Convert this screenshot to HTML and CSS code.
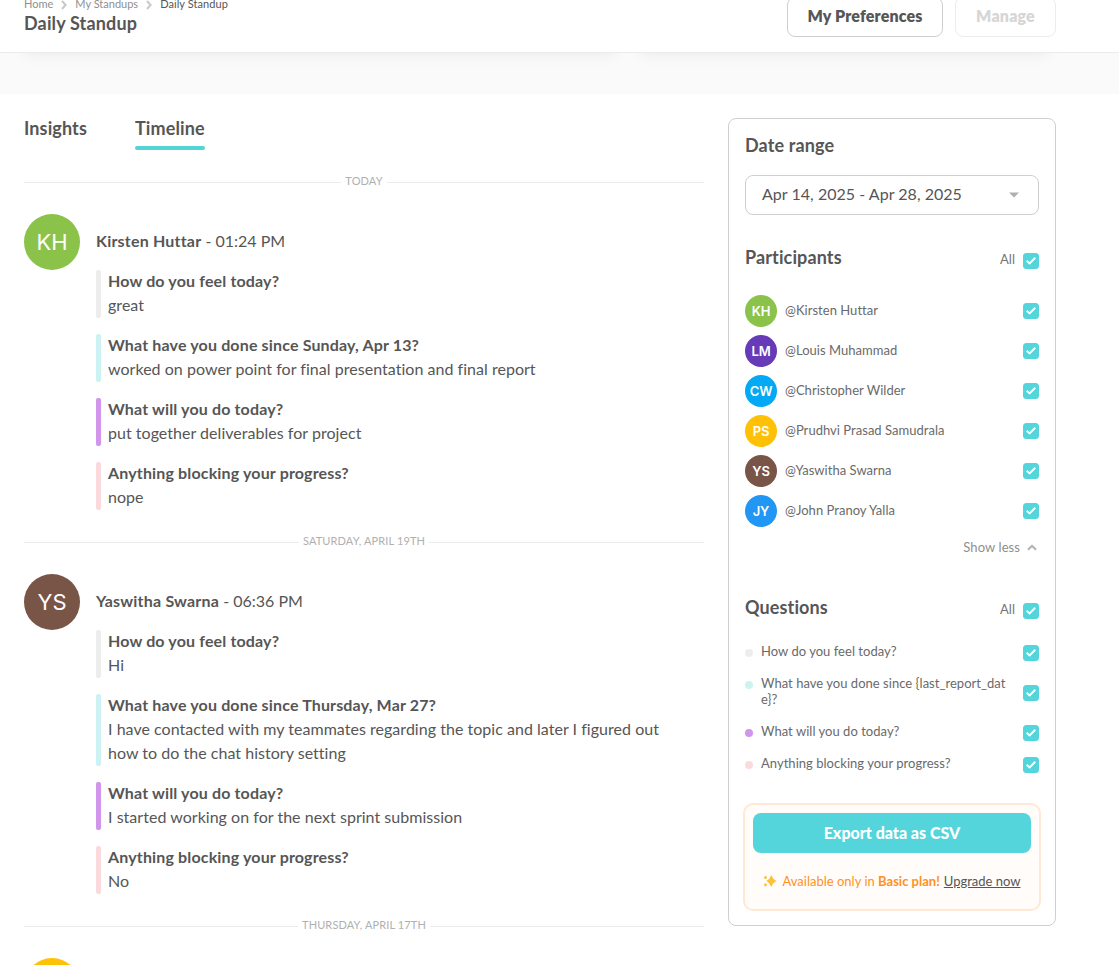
FILE: index.html
```html
<!DOCTYPE html>
<html lang="en">
<head>
<meta charset="utf-8">
<title>Daily Standup</title>
<link rel="stylesheet" href="styles.css">
</head>
<body>
<svg class="defs" width="0" height="0" aria-hidden="true">
  <symbol id="check" viewBox="0 0 16 16"><rect width="16" height="16" rx="3.5" fill="#54d4db"/><path d="M3.7 7.700 6.600 10.400 12.200 4.800" fill="none" stroke="#fff" stroke-width="2"/></symbol>
  <symbol id="chevron" viewBox="0 0 6 10"><path d="M1 1 4.6 5 1 9" fill="none" stroke="#c9c9c9" stroke-width="2"/></symbol>
</svg>
<header class="header">
  <div class="heading">
    <nav class="crumbs">
      <span>Home</span><svg class="sep"><use href="#chevron"/></svg><span>My Standups</span><svg class="sep"><use href="#chevron"/></svg><span class="current">Daily Standup</span>
    </nav>
    <h1 class="title">Daily Standup</h1>
  </div>
  <div class="actions">
    <button class="btn prefs">My Preferences</button>
    <button class="btn disabled">Manage</button>
  </div>
</header>
<div class="band"><div class="card-shadow wide"></div><div class="card-shadow"></div></div>
<main class="main">
  <section class="timeline">
    <div class="tabs"><span class="tab">Insights</span><span class="tab active">Timeline</span></div>
    <div class="divider"><span>TODAY</span></div>
    <article class="entry">
      <div class="avatar green">KH</div>
      <div class="report">
        <div class="author"><b>Kirsten Huttar</b> - 01:24 PM</div>
        <div class="answers">
          <div class="answer gray"><b>How do you feel today?</b><p>great</p></div>
          <div class="answer aqua"><b>What have you done since Sunday, Apr 13?</b><p>worked on power point for final presentation and final report</p></div>
          <div class="answer violet"><b>What will you do today?</b><p>put together deliverables for project</p></div>
          <div class="answer pink"><b>Anything blocking your progress?</b><p>nope</p></div>
        </div>
      </div>
    </article>
    <div class="divider"><span>SATURDAY, APRIL 19TH</span></div>
    <article class="entry">
      <div class="avatar brown">YS</div>
      <div class="report">
        <div class="author"><b>Yaswitha Swarna</b> - 06:36 PM</div>
        <div class="answers">
          <div class="answer gray"><b>How do you feel today?</b><p>Hi</p></div>
          <div class="answer aqua"><b>What have you done since Thursday, Mar 27?</b><p>I have contacted with my teammates regarding the topic and later I figured out<br>how to do the chat history setting</p></div>
          <div class="answer violet"><b>What will you do today?</b><p>I started working on for the next sprint submission</p></div>
          <div class="answer pink"><b>Anything blocking your progress?</b><p>No</p></div>
        </div>
      </div>
    </article>
    <div class="divider"><span>THURSDAY, APRIL 17TH</span></div>
    <article class="entry"><div class="avatar yellow"></div></article>
  </section>
  <aside class="panel">
    <h2 class="panel-title">Date range</h2>
    <div class="select"><span>Apr 14, 2025 - Apr 28, 2025</span><svg width="10" height="6" viewBox="0 0 10 6"><path d="M0 .5H10L5 5.5Z" fill="#adb0b0"/></svg></div>
    <div class="group-head participants-head"><h2 class="panel-title">Participants</h2><span class="all">All</span><svg class="check"><use href="#check"/></svg></div>
    <ul class="people">
      <li><span class="avatar small green">KH</span><span class="name">@Kirsten Huttar</span><svg class="check"><use href="#check"/></svg></li>
      <li><span class="avatar small purple">LM</span><span class="name">@Louis Muhammad</span><svg class="check"><use href="#check"/></svg></li>
      <li><span class="avatar small sky">CW</span><span class="name">@Christopher Wilder</span><svg class="check"><use href="#check"/></svg></li>
      <li><span class="avatar small yellow">PS</span><span class="name">@Prudhvi Prasad Samudrala</span><svg class="check"><use href="#check"/></svg></li>
      <li><span class="avatar small brown">YS</span><span class="name">@Yaswitha Swarna</span><svg class="check"><use href="#check"/></svg></li>
      <li><span class="avatar small blue">JY</span><span class="name">@John Pranoy Yalla</span><svg class="check"><use href="#check"/></svg></li>
    </ul>
    <div class="less"><span>Show less</span><svg width="10" height="7" viewBox="0 0 10 7"><path d="M1 5.8 5 1.8 9 5.8" fill="none" stroke="#b0b0b0" stroke-width="2"/></svg></div>
    <div class="group-head questions-head"><h2 class="panel-title">Questions</h2><span class="all">All</span><svg class="check"><use href="#check"/></svg></div>
    <ul class="questions">
      <li class="gray"><span class="text">How do you feel today?</span><svg class="check"><use href="#check"/></svg></li>
      <li class="aqua"><span class="text">What have you done since {last_report_dat<br>e}?</span><svg class="check"><use href="#check"/></svg></li>
      <li class="violet"><span class="text">What will you do today?</span><svg class="check"><use href="#check"/></svg></li>
      <li class="pink"><span class="text">Anything blocking your progress?</span><svg class="check"><use href="#check"/></svg></li>
    </ul>
    <div class="export">
      <button class="export-btn">Export data as CSV</button>
      <div class="upsell">
        <svg width="14" height="12" viewBox="0 0 14 12" fill="#fcc23c"><path d="M8.300 0Q9.900 4.400 13.600 6 9.900 7.600 8.300 12 6.700 7.600 3.400 6 6.700 4.400 8.300 0Z"/><circle cx="2.500" cy="2.500" r="1.500"/><circle cx="2.500" cy="9.700" r="1.500"/></svg>
        <span class="offer">Available only in <b>Basic plan!</b></span>
        <a class="upgrade">Upgrade now</a>
      </div>
    </div>
  </aside>
</main>
</body>
</html>
```
FILE: styles.css
```css
* { box-sizing: border-box; }
html, body { margin: 0; height: 965px; overflow: hidden; }
body { font: 16px/24px Lato, sans-serif; font-variant-ligatures: none; color: #565656; background: #fff; }
h1, h2, p, ul { margin: 0; padding: 0; }
ul { list-style: none; }
button { font-family: inherit; }
.defs { position: absolute; }

.header { display: flex; justify-content: space-between; width: 100%; height: 53px; padding: 0 63px 0 24px; border-bottom: 1px solid #ebebeb; }
.heading { margin-top: -4px; }
.crumbs { display: flex; align-items: center; height: 16px; font-size: 11px; line-height: 16px; color: #8f8f8f; }
.crumbs .current { color: #565656; letter-spacing: .08px; }
.sep { width: 6px; height: 10px; margin: 1px 8px 0; }
.title { margin-top: -1px; font-size: 18px; line-height: 24px; font-weight: 700; letter-spacing: .15px; }
.actions { display: flex; gap: 12px; margin-top: -3px; }
.btn { width: 101px; height: 40px; padding: 0 0 2px; border: 1px solid #cfcfcf; border-radius: 8px; background: #fff; color: #565656; font-size: 16px; font-weight: 800; line-height: 24px; letter-spacing: .15px; }
.btn.prefs { width: 156px; }
.btn.disabled { border-color: #ececec; color: #d6d6d6; }

.band { display: flex; gap: 24px; height: 41px; padding-left: 24px; background: #fafafa; overflow: hidden; }
.card-shadow { width: 408px; height: 20px; margin-top: -22px; box-shadow: 0 2px 16px rgba(0, 0, 0, .08); }
.card-shadow.wide { width: 592px; }

.main { display: flex; align-items: flex-start; gap: 24px; padding: 24px 0 0 24px; }
.timeline { width: 680px; height: 847px; overflow: hidden; }
.tabs { display: flex; gap: 48px; height: 32px; }
.tab { position: relative; height: 32px; font-size: 18px; line-height: 20px; font-weight: 700; letter-spacing: .12px; }
.tab.active::after { content: ""; position: absolute; left: 0; right: 0; bottom: 0; height: 4px; border-radius: 2px; background: #54d4d4; }
.divider { display: flex; align-items: center; gap: 4px; height: 64px; font-size: 11px; line-height: 16px; letter-spacing: .13px; color: #b0b0b0; }
.divider::before, .divider::after { content: ""; flex: 1; height: 1px; margin-top: 1px; background: #ebebeb; }
.divider span { margin-top: -3px; }

.entry { display: flex; gap: 16px; }
.avatar { flex: none; display: flex; align-items: center; justify-content: center; width: 56px; height: 56px; border-radius: 50%; color: #fff; font: 400 22px/58px Inter, sans-serif; }
.avatar.small { width: 32px; height: 32px; font: 600 13px/32px Inter, sans-serif; letter-spacing: -.2px; }
.avatar.green { background: #8bc34a; }
.avatar.brown { background: #795548; }
.avatar.yellow { background: #ffc107; }
.avatar.purple { background: #673ab7; }
.avatar.sky { background: #03a9f4; }
.avatar.blue { background: #2196f3; }
.author { height: 56px; line-height: 53px; }
.author b { letter-spacing: .2px; }
.answers { display: flex; flex-direction: column; gap: 16px; }
.answer { position: relative; padding-left: 12px; line-height: 24px; }
.answer b, .answer p { display: block; position: relative; top: -1px; }
.answer b { letter-spacing: .15px; }
.answer p { letter-spacing: .03px; }
.answer::before { content: ""; position: absolute; left: 0; top: 0; bottom: 0; width: 5px; border-radius: 2px; background: var(--tone); }
.gray { --tone: #ededed; }
.aqua { --tone: #cdf2f4; }
.violet { --tone: #d196eb; }
.pink { --tone: #fbdadd; }

.panel { width: 328px; height: 808px; padding: 14px 16px 15px; border: 1px solid #cfcfcf; border-radius: 8px; }
.panel-title { font-size: 18px; line-height: 24px; font-weight: 700; letter-spacing: .12px; }
.select { display: flex; align-items: center; justify-content: space-between; height: 40px; margin-top: 18px; padding: 0 19px 2px 16px; border: 1px solid #cfcfcf; border-radius: 8px; letter-spacing: .03px; }
.select svg { margin-top: 2px; }
.check { flex: none; width: 16px; height: 16px; }
.group-head { display: flex; align-items: flex-start; height: 24px; }
.participants-head { margin-top: 30px; }
.group-head .panel-title { flex: 1; }
.all { margin: 2px 8px 0 0; font-size: 13px; line-height: 24px; color: #757575; }
.group-head .check { margin-top: 8px; }
.people { display: flex; flex-direction: column; gap: 8px; margin-top: 26px; font-size: 13px; color: #6a6a6a; }
.people li { display: flex; align-items: center; gap: 8px; height: 32px; }
.name { flex: 1; margin-top: -2px; letter-spacing: .03px; }
.less { display: flex; align-items: center; justify-content: flex-end; gap: 7px; height: 24px; margin-top: 8px; padding-right: 2px; font-size: 13px; letter-spacing: .08px; color: #8f8f8f; }
.questions-head { margin-top: 36px; }
.questions { display: flex; flex-direction: column; gap: 16px; margin-top: 26px; font-size: 13px; line-height: 16px; letter-spacing: .03px; color: #6a6a6a; }
.questions li { display: flex; align-items: center; }
.text { flex: 1; margin: -3px 0 1px; }
.questions .aqua { height: 32px; }
.questions li::before { content: ""; align-self: flex-start; width: 8px; height: 8px; margin: 4px 8px 0 0; border-radius: 50%; background: var(--tone); }
.export { height: 108px; margin: 30px -2px 0; padding: 8px; border: 2px solid #ffe9d4; border-radius: 10px; background: #fffcfa; }
.export-btn { width: 100%; height: 40px; padding: 0 0 2px; border: 0; border-radius: 8px; background: #54d4db; color: #fff; font-size: 16px; font-weight: 900; }
.upsell { display: flex; align-items: center; justify-content: center; margin-top: 16px; font-size: 13px; line-height: 24px; }
.offer { margin: 0 4px 0 5px; color: #ff9222; }
.upgrade { color: #565656; text-decoration: underline; }
```
